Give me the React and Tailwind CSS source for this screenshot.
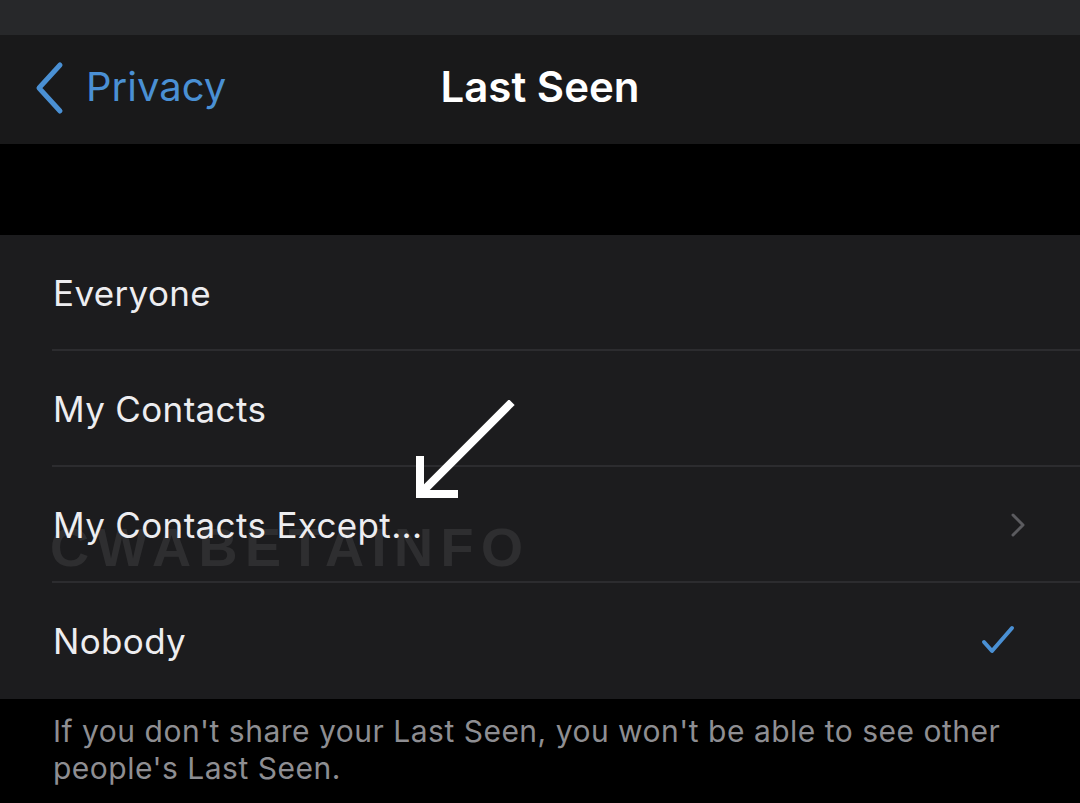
import React from "react";

function Row({ label, right, last }) {
  return (
    <div className="relative flex h-[116px] items-center pl-[53px] pr-[56px]">
      <span className="flex-1 text-[35px] tracking-[0.35px] text-[#ededf0]">{label}</span>
      {right}
      {!last && <div className="absolute bottom-0 left-[52px] right-0 h-[2px] bg-[#2c2c2f]" />}
    </div>
  );
}

export default function App() {
  return (
    <div className="w-[1080px] h-[803px] overflow-hidden bg-black" style={{ fontFamily: "Inter, 'Noto Sans', sans-serif" }}>
      <div className="h-[35px] bg-[#27282a]" />
      <div className="relative flex h-[109px] items-center bg-[#19191a]">
        <div className="flex items-center pl-[33px]">
          <svg width="32" height="54" viewBox="0 0 32 54" className="mr-[21px] mt-[-4px]">
            <path d="M27 4 L6 27 L27 50" fill="none" stroke="#4a90d4" strokeWidth="5" strokeLinecap="round" strokeLinejoin="round" />
          </svg>
          <span className="text-[40px] text-[#4a90d4] mt-[-6px]">Privacy</span>
        </div>
        <div className="absolute inset-0 flex items-center justify-center pointer-events-none">
          <span className="text-[42px] font-semibold text-white mt-[-6px]">Last Seen</span>
        </div>
      </div>
      <div className="h-[91px] bg-black" />
      <div className="relative bg-[#1c1c1e]">
        <Row label="Everyone" />
        <Row label="My Contacts" />
        <Row
          label="My Contacts Except..."
          right={
            <svg width="16" height="26" viewBox="0 0 16 26" className="mr-[-2px]">
              <path d="M3 3 L13 13 L3 23" fill="none" stroke="#5b5b5f" strokeWidth="3" strokeLinecap="round" strokeLinejoin="round" />
            </svg>
          }
        />
        <Row
          label="Nobody"
          last
          right={
            <svg width="36" height="32" viewBox="0 0 36 32" className="mr-[8px] mt-[-2px]">
              <path d="M4 18 L12 27 L32 4" fill="none" stroke="#4a90d4" strokeWidth="4" strokeLinecap="round" strokeLinejoin="round" />
            </svg>
          }
        />
        <div className="pointer-events-none absolute left-[50px] top-[285px] text-[54px] font-black leading-none tracking-[7.5px] text-[#ffffff] opacity-[0.08]" style={{ fontFamily: "'Liberation Sans', sans-serif" }}>
          CWABETAINFO
        </div>
        <svg className="pointer-events-none absolute left-[410px] top-[165px]" width="110" height="110" viewBox="0 0 110 110">
          <g fill="none" stroke="#ffffff" strokeWidth="8" strokeLinecap="square">
            <path d="M99 5 L12 92" />
            <path d="M10 94 L44 94" />
            <path d="M10 94 L10 60" />
          </g>
        </svg>
      </div>
      <div className="px-[53px] pt-[14px] text-[30px] leading-[37px] tracking-[0.5px] text-[#8e8e92]">
        If you don't share your Last Seen, you won't be able to see other people's Last Seen.
      </div>
    </div>
  );
}
